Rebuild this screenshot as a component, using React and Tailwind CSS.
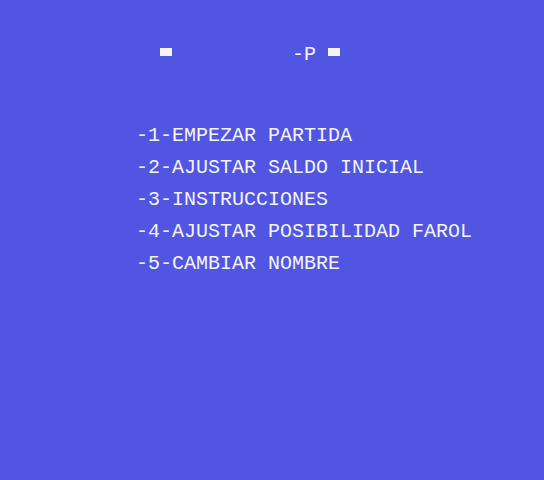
export default function App() {
  const items = [
    '-1-EMPEZAR PARTIDA',
    '-2-AJUSTAR SALDO INICIAL',
    '-3-INSTRUCCIONES',
    '-4-AJUSTAR POSIBILIDAD FAROL',
    '-5-CAMBIAR NOMBRE',
  ];

  return (
    <div
      className="w-[544px] h-[480px] bg-[#5055e2] text-[#f4f4f4] text-[20px] leading-[32px] pt-[40px] overflow-hidden"
      style={{ fontFamily: '"Liberation Mono", "DejaVu Sans Mono", monospace' }}
    >
      <div className="flex items-start h-[32px] pl-[160px]">
        <div className="w-[12px] h-[8px] mt-[8px] bg-[#f4f4f4]" />
        <span className="ml-[120px] -mt-[1px] whitespace-pre">-P</span>
        <div className="w-[12px] h-[8px] mt-[8px] ml-[12px] bg-[#f4f4f4]" />
      </div>
      <div className="mt-[48px] pl-[136px] flex flex-col">
        {items.map((item) => (
          <div key={item} className="h-[32px] whitespace-pre">
            {item}
          </div>
        ))}
      </div>
    </div>
  );
}
